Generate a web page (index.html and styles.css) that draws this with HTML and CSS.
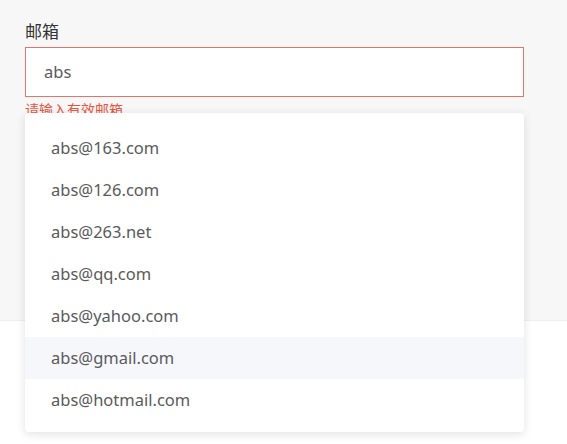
FILE: index.html
```html
<!DOCTYPE html>
<html lang="zh">
<head>
<meta charset="utf-8">
<link rel="stylesheet" href="styles.css">
</head>
<body>
<div class="page">
  <section class="form">
    <div class="field">
      <label class="label">邮箱</label>
      <div class="input">abs</div>
      <div class="error">请输入有效邮箱</div>
      <ul class="dropdown">
        <li class="item">abs@163.com</li>
        <li class="item">abs@126.com</li>
        <li class="item">abs@263.net</li>
        <li class="item">abs@qq.com</li>
        <li class="item">abs@yahoo.com</li>
        <li class="item active">abs@gmail.com</li>
        <li class="item">abs@hotmail.com</li>
      </ul>
    </div>
  </section>
  <section class="footer"></section>
</div>
</body>
</html>
```
FILE: styles.css
```css
html, body {
  margin: 0;
  padding: 0;
}
body {
  width: 567px;
  height: 444px;
  overflow: hidden;
  background: #f7f7f7;
  font-family: "Noto Sans", "Noto Sans CJK SC", sans-serif;
  color: #333;
}
.page {
  display: flex;
  flex-direction: column;
  height: 444px;
}
.form {
  height: 320px;
  padding: 18px 43px 0 25px;
  box-sizing: border-box;
  background: #f7f7f7;
}
.field {
  position: relative;
  display: flex;
  flex-direction: column;
}
.label {
  font-size: 17px;
  line-height: 26px;
  color: #333;
  font-family: "Noto Sans CJK SC", sans-serif;
  margin-bottom: 3px;
}
.input {
  height: 50px;
  box-sizing: border-box;
  border: 1px solid #e0776c;
  background: #fff;
  padding: 0 18px;
  font-size: 16.5px;
  line-height: 48px;
  color: #5a5a5a;
}
.error {
  font-size: 14px;
  line-height: 18px;
  margin-top: 3px;
  color: #e8553f;
  font-family: "Noto Sans CJK SC", sans-serif;
}
.dropdown {
  position: absolute;
  left: 0;
  top: 95px;
  width: 499px;
  margin: 0;
  padding: 14px 0 11px;
  list-style: none;
  background: #fff;
  border-radius: 4px;
  box-shadow: 0 2px 10px rgba(0, 0, 0, 0.12);
  box-sizing: border-box;
}
.item {
  height: 42px;
  line-height: 42px;
  padding: 0 26px;
  font-size: 16.5px;
  color: #5a5a5a;
}
.item.active {
  background: #f6f7fa;
}
.footer {
  flex: 1;
  background: #fff;
  border-top: 1px solid #eee;
}
```
